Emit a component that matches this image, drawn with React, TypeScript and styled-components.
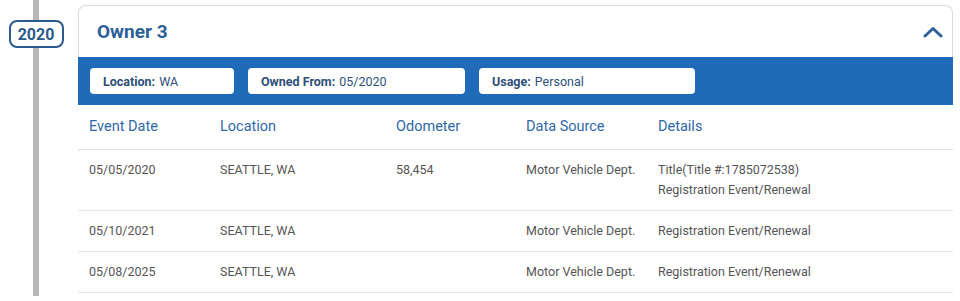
import React from 'react'
import styled, { createGlobalStyle } from 'styled-components'

const GlobalStyle = createGlobalStyle`
  body {
    margin: 0;
    background: #fff;
    font-family: Roboto, "Liberation Sans", Arial, sans-serif;
  }
`

const Page = styled.div`
  display: grid;
  grid-template-columns: 78px 875px;
  height: 301px;
  overflow: hidden;
`

const Timeline = styled.div`
  display: flex;
  flex-direction: column;
  align-items: center;
  padding-left: 8px;
  width: 56px;
`

const Bar = styled.div<{ $grow?: boolean }>`
  width: 6px;
  background: #b8b8b8;
  height: ${({ $grow }) => ($grow ? '248px' : '20px')};
`

const YearBadge = styled.div`
  box-sizing: border-box;
  width: 55px;
  height: 28px;
  display: flex;
  align-items: center;
  justify-content: center;
  border: 2px solid #2c5a8c;
  border-radius: 8px;
  background: #fff;
  color: #2c5a8c;
  font-size: 16px;
  font-weight: 700;
`

const Card = styled.div`
  margin-top: 5px;
  display: flex;
  flex-direction: column;
`

const CardHeader = styled.div`
  box-sizing: border-box;
  height: 52px;
  display: flex;
  align-items: center;
  justify-content: space-between;
  padding: 0 9px 0 18px;
  border: 1px solid #dcdcdc;
  border-bottom: none;
  border-radius: 8px 8px 0 0;
`

const Title = styled.h2`
  margin: 0;
  font-size: 19px;
  font-weight: 700;
  color: #2c5f98;
`

const Chevron = () => (
  <svg width="20" height="12" viewBox="0 0 20 12" fill="none">
    <polyline
      points="2,10 10,2.5 18,10"
      stroke="#2c5f98"
      strokeWidth="3"
      strokeLinecap="round"
      strokeLinejoin="round"
    />
  </svg>
)

const Band = styled.div`
  height: 48px;
  box-sizing: border-box;
  display: flex;
  align-items: center;
  gap: 14px;
  padding: 0 12px;
  background: #1f6bb7;
`

const Pill = styled.div<{ $width: number }>`
  box-sizing: border-box;
  width: ${({ $width }) => $width}px;
  height: 26px;
  display: flex;
  align-items: center;
  padding-left: 13px;
  background: #fff;
  border-radius: 4px;
  font-size: 12.5px;
  color: #2d4f78;
`

const PillLabel = styled.span`
  font-weight: 700;
  margin-right: 4px;
`

const Row = styled.div<{ $head?: boolean }>`
  display: grid;
  grid-template-columns: 131px 176px 130px 132px 1fr;
  padding: ${({ $head }) => ($head ? '12px 0 12px 11px' : '10px 0 10px 11px')};
  border-bottom: 1px solid ${({ $head }) => ($head ? '#dedede' : '#e8e8e8')};
  font-size: ${({ $head }) => ($head ? '14.5px' : '12.5px')};
  line-height: 20px;
  color: ${({ $head }) => ($head ? '#2f68a6' : '#555')};
`

const Cell = styled.div`
  display: flex;
  flex-direction: column;
`

const rows = [
  {
    date: '05/05/2020',
    location: 'SEATTLE, WA',
    odometer: '58,454',
    source: 'Motor Vehicle Dept.',
    details: ['Title(Title #:1785072538)', 'Registration Event/Renewal'],
  },
  {
    date: '05/10/2021',
    location: 'SEATTLE, WA',
    odometer: '',
    source: 'Motor Vehicle Dept.',
    details: ['Registration Event/Renewal'],
  },
  {
    date: '05/08/2025',
    location: 'SEATTLE, WA',
    odometer: '',
    source: 'Motor Vehicle Dept.',
    details: ['Registration Event/Renewal'],
  },
]

const App = () => {
  return (
    <>
      <GlobalStyle />
      <Page>
        <Timeline>
          <Bar />
          <YearBadge>2020</YearBadge>
          <Bar $grow />
        </Timeline>

        <Card>
          <CardHeader>
            <Title>Owner 3</Title>
            <Chevron />
          </CardHeader>

          <Band>
            <Pill $width={144}><PillLabel>Location:</PillLabel>WA</Pill>
            <Pill $width={217}><PillLabel>Owned From:</PillLabel>05/2020</Pill>
            <Pill $width={216}><PillLabel>Usage:</PillLabel>Personal</Pill>
          </Band>

          <Row $head>
            <Cell>Event Date</Cell>
            <Cell>Location</Cell>
            <Cell>Odometer</Cell>
            <Cell>Data Source</Cell>
            <Cell>Details</Cell>
          </Row>

          {rows.map((r) => (
            <Row key={r.date}>
              <Cell>{r.date}</Cell>
              <Cell>{r.location}</Cell>
              <Cell>{r.odometer}</Cell>
              <Cell>{r.source}</Cell>
              <Cell>
                {r.details.map((d) => (
                  <span key={d}>{d}</span>
                ))}
              </Cell>
            </Row>
          ))}
        </Card>
      </Page>
    </>
  )
}

export default App
